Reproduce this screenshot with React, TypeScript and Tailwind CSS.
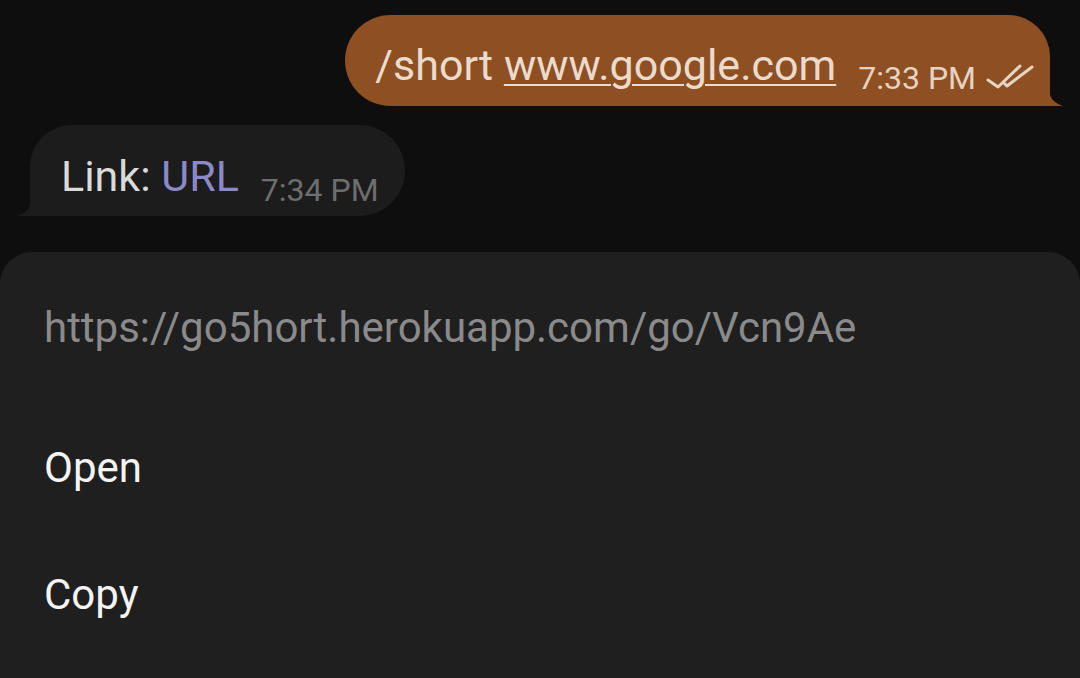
const font = { fontFamily: 'Roboto, "Noto Sans", sans-serif' };

function DoubleCheck() {
  return (
    <svg width="48" height="28" viewBox="0 0 48 28" fill="none" stroke="#e6d4c4" strokeWidth="3" strokeLinecap="round" strokeLinejoin="round">
      <path d="M2 18 L12 25 L34 4" />
      <path d="M18 21 L21 24 L46 5" />
    </svg>
  );
}

function OutgoingBubble() {
  return (
    <div className="flex justify-end pr-[30px]">
      <div className="relative flex h-[91px] items-end rounded-l-[46px] rounded-tr-[42px] bg-[#8e4f23] pl-[30px] pr-[16px]">
        <div className="mb-[17px] text-[43px] leading-[48px] text-[#eadbcc]">
          /short{' '}
          <span className="underline decoration-2 underline-offset-[4px]">www.google.com</span>
        </div>
        <div className="mb-[10px] ml-[22px] text-[32px] leading-[36px] text-[#e6d3c2]">7:33 PM</div>
        <div className="mb-[16px] ml-[10px]">
          <DoubleCheck />
        </div>
        <svg className="absolute bottom-0 right-[-14px]" width="15" height="34" viewBox="0 0 15 34">
          <path d="M0 0 L0 16 C0 26 5 31 14 34 L0 34 Z" fill="#8e4f23" />
        </svg>
      </div>
    </div>
  );
}

function IncomingBubble() {
  return (
    <div className="flex pl-[30px]">
      <div className="relative flex h-[91px] items-end rounded-r-[46px] rounded-tl-[42px] bg-[#1c1c1c] pl-[31px] pr-[26px]">
        <div className="mb-[16px] text-[43px] leading-[48px] text-[#dadada]">
          Link: <span className="text-[#8c89c8]">URL</span>
        </div>
        <div className="mb-[8px] ml-[22px] text-[32px] leading-[36px] text-[#6e6e6e]">7:34 PM</div>
        <svg className="absolute bottom-0 left-[-14px]" width="15" height="34" viewBox="0 0 15 34">
          <path d="M15 0 L15 16 C15 26 10 31 1 34 L15 34 Z" fill="#1c1c1c" />
        </svg>
      </div>
    </div>
  );
}

export default function App() {
  return (
    <div className="flex h-[678px] w-[1080px] flex-col overflow-hidden bg-[#0e0e0e]" style={font}>
      <div className="flex flex-col gap-[19px] pt-[15px]">
        <OutgoingBubble />
        <IncomingBubble />
      </div>
      <div className="mt-[36px] flex flex-1 flex-col rounded-t-[32px] bg-[#1f1f1f] px-[44px]">
        <div className="flex h-[152px] items-center text-[42px] leading-[48px] text-[#8a8a8a]">
          https://go5hort.herokuapp.com/go/Vcn9Ae
        </div>
        <div className="flex h-[127px] items-center text-[42px] leading-[48px] text-[#f4f4f4]">Open</div>
        <div className="flex h-[128px] items-center text-[42px] leading-[48px] text-[#f4f4f4]">Copy</div>
      </div>
    </div>
  );
}
